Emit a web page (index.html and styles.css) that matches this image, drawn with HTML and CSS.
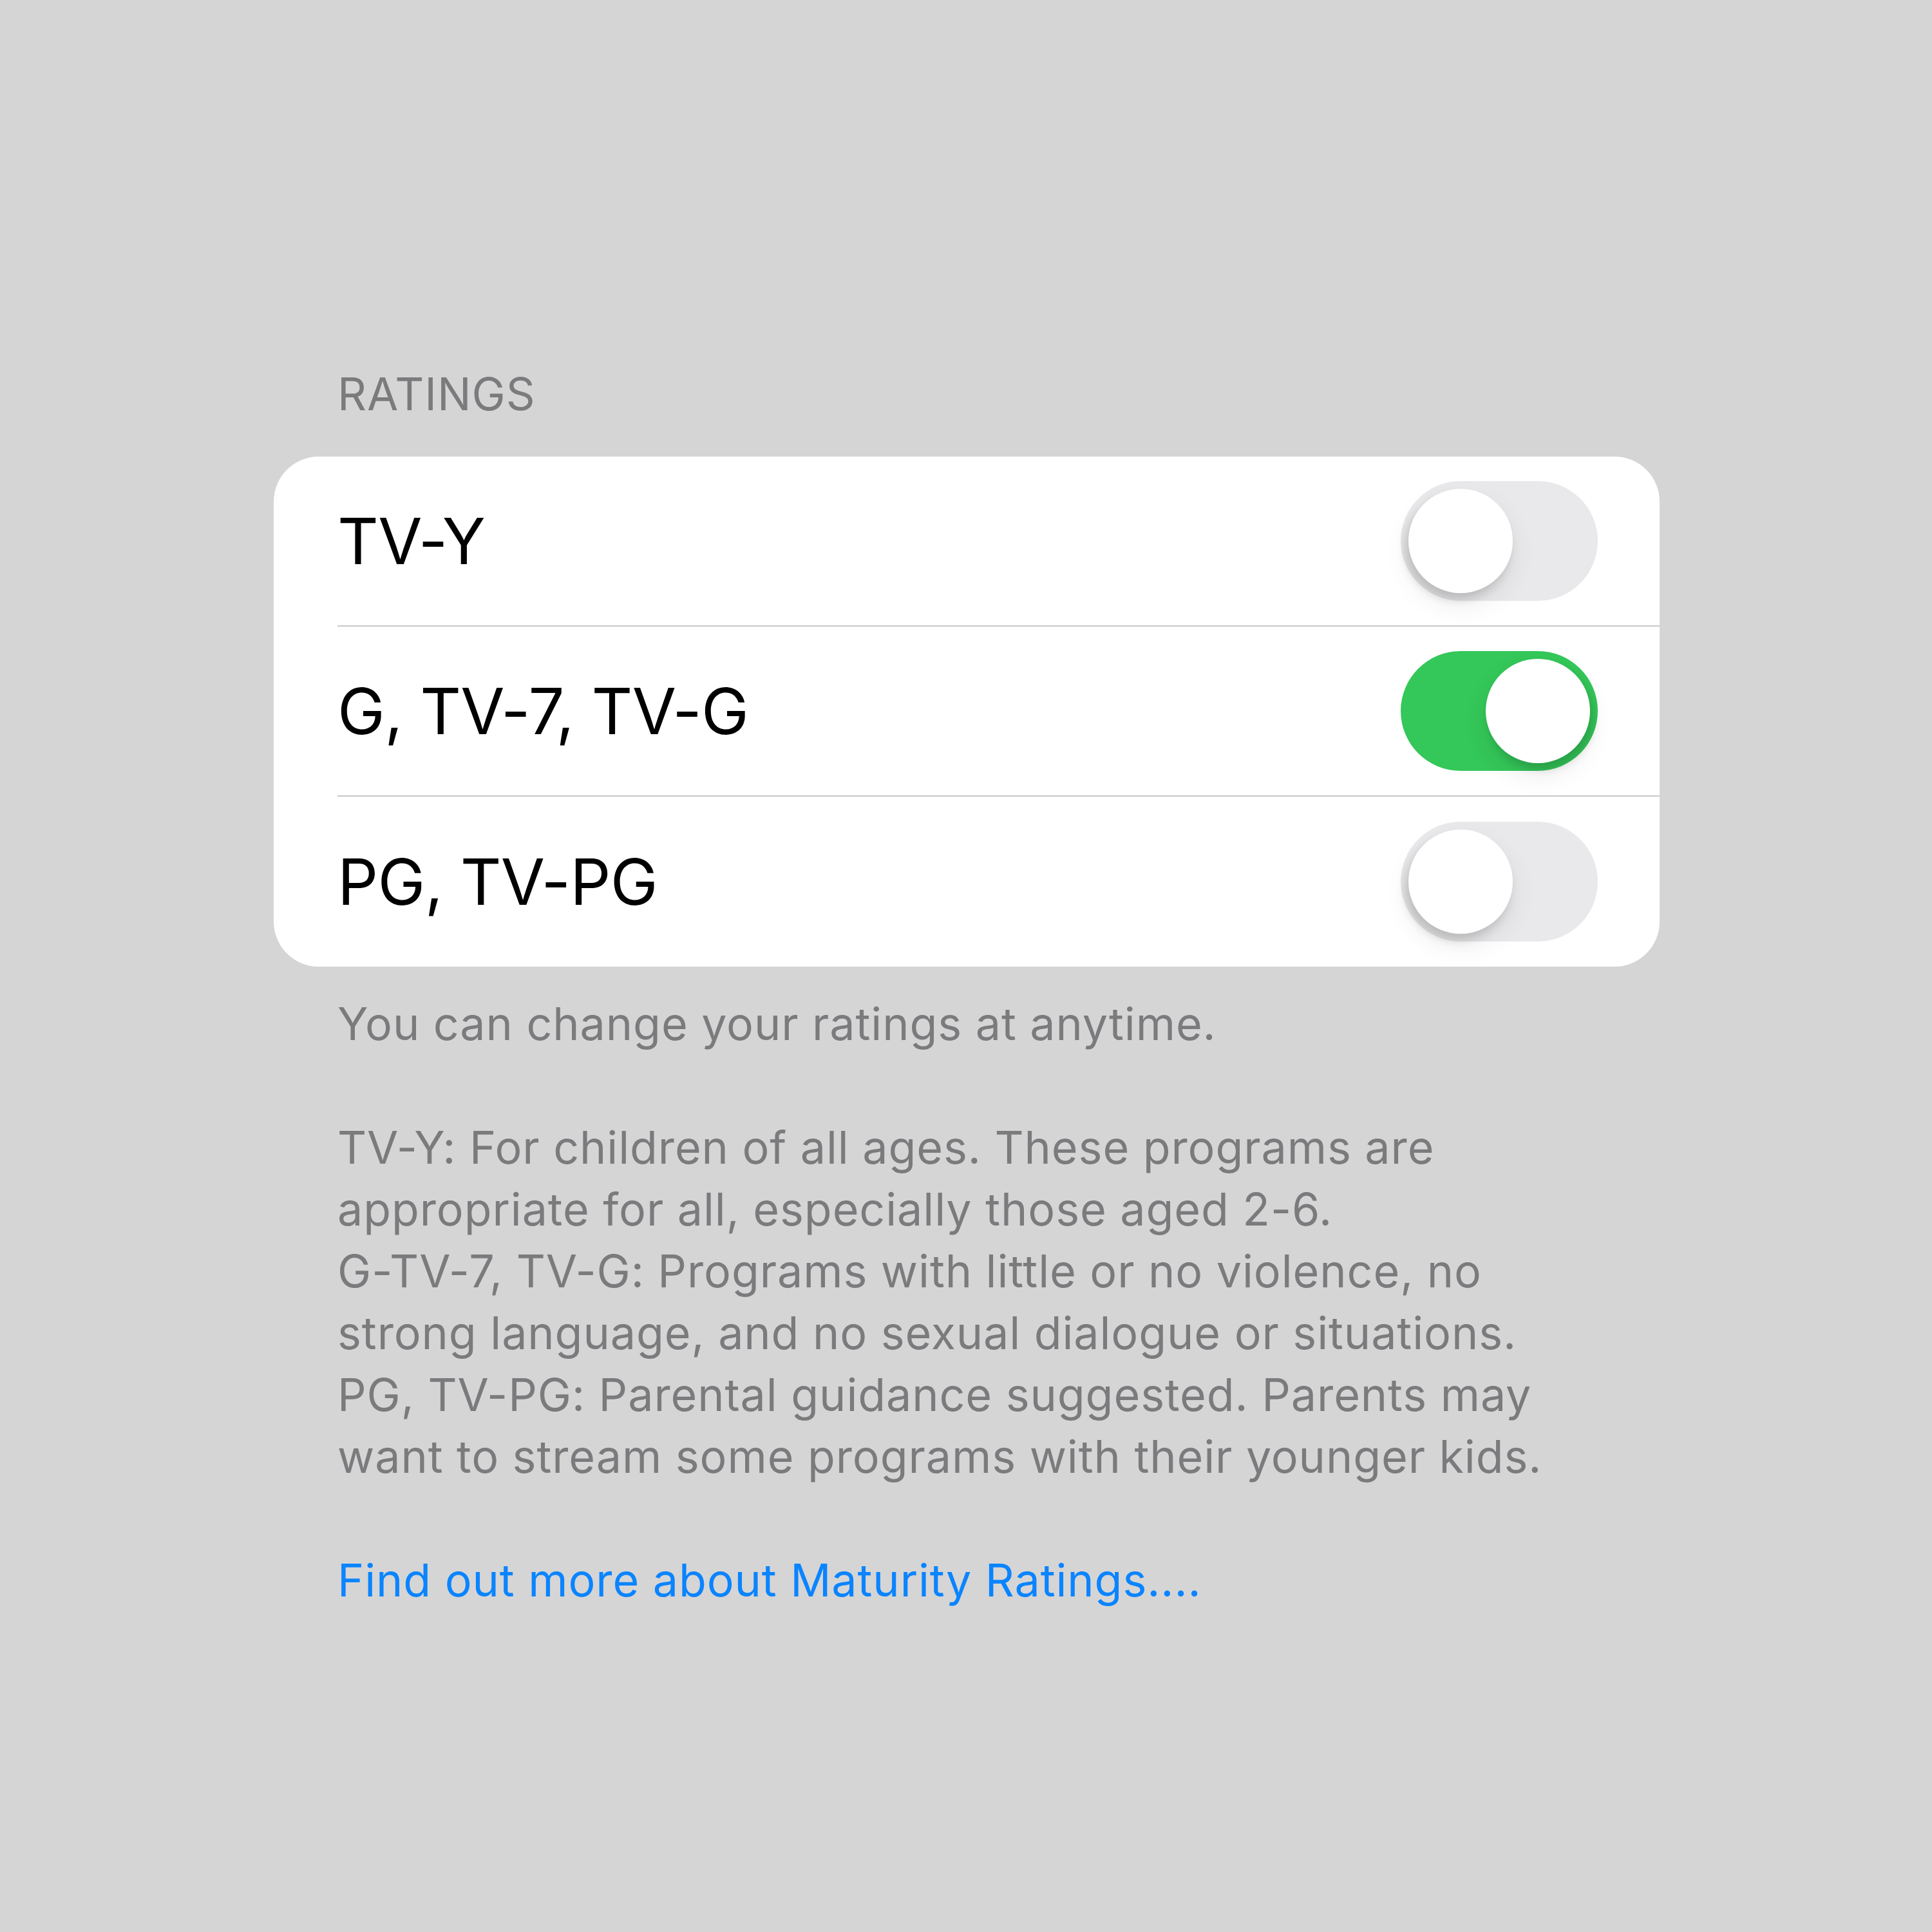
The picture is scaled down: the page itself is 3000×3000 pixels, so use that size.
FILE: index.html
```html
<!DOCTYPE html>
<html lang="en">
<head>
    <meta charset="UTF-8">
    <meta name="viewport" content="width=device-width, initial-scale=1.0">
    <title>Ratings</title>
    <link rel="stylesheet" href="styles.css">
</head>
<body>
    <div class="settings">
        <div class="section-title">RATINGS</div>
        <div class="group">
            <div class="cell">
                <span class="label">TV-Y</span>
                <span class="switch"><span class="knob"></span></span>
            </div>
            <div class="cell">
                <span class="label">G, TV-7, TV-G</span>
                <span class="switch on"><span class="knob"></span></span>
            </div>
            <div class="cell">
                <span class="label">PG, TV-PG</span>
                <span class="switch"><span class="knob"></span></span>
            </div>
        </div>
        <div class="footer">
            <p>You can change your ratings at anytime.</p>
            <p>TV-Y: For children of all ages. These programs are<br>
            appropriate for all, especially those aged 2-6.<br>
            G-TV-7, TV-G: Programs with little or no violence, no<br>
            strong language, and no sexual dialogue or situations.<br>
            PG, TV-PG: Parental guidance suggested. Parents may<br>
            want to stream some programs with their younger kids.</p>
            <p><a class="more" href="#">Find out more about Maturity Ratings....</a></p>
        </div>
    </div>
</body>
</html>
```

FILE: styles.css
```css
body {
    margin: 0;
    background-color: #d5d5d5;
    font-family: Inter, "Liberation Sans", sans-serif;
}

.settings {
    width: 2152px;
    padding: 564px 0 0 425px;
}

.section-title {
    padding-left: 99px;
    font-size: 70px;
    line-height: 96px;
    letter-spacing: 0.9px;
    color: #7b7b7e;
    margin-bottom: 49px;
}

.group {
    background-color: #fff;
    border-radius: 70px;
    overflow: hidden;
}

.cell {
    display: flex;
    align-items: center;
    justify-content: space-between;
    height: 264px;
    box-sizing: border-box;
    margin-left: 99px;
    padding-right: 96px;
    border-bottom: 2px solid #c8c8ca;
}
.cell:last-child {
    border-bottom: none;
}

.label {
    font-size: 99px;
    letter-spacing: -0.7px;
    color: #000;
}

.switch {
    position: relative;
    width: 306px;
    height: 186px;
    border-radius: 93px;
    background-color: #e9e9eb;
}
.switch .knob {
    position: absolute;
    top: 12px;
    left: 12px;
    width: 162px;
    height: 162px;
    border-radius: 50%;
    background-color: #fff;
    box-shadow: -5px 10px 14px rgba(0, 0, 0, 0.14), 0 18px 40px rgba(0, 0, 0, 0.08);
}
.switch.on {
    background-color: #34c759;
}
.switch.on .knob {
    left: 132px;
    box-shadow: 5px 10px 14px rgba(0, 0, 0, 0.14), 0 18px 40px rgba(0, 0, 0, 0.08);
}

.footer {
    padding-left: 99px;
    margin-top: 41px;
    font-size: 70px;
    line-height: 96px;
    letter-spacing: 0.9px;
    color: #7b7b7e;
}
.footer p {
    margin: 0 0 96px;
}

.more {
    color: #0a84ff;
    text-decoration: none;
}
```
